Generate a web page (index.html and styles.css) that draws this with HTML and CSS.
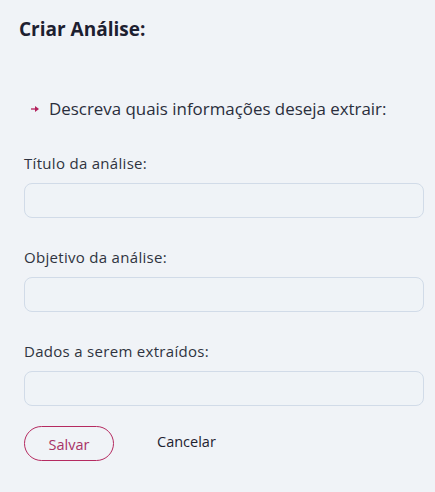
FILE: index.html
```html
<!DOCTYPE html>
<html lang="pt">
<head>
<meta charset="utf-8">
<link rel="stylesheet" href="styles.css">
</head>
<body>
<main class="page">
  <h1 class="title">Criar Análise:</h1>
  <p class="hint">
    <svg class="arrow" width="8" height="8" viewBox="0 0 8 8"><path d="M0 4h5" stroke="#b3205c" stroke-width="1.3"/><path d="M4 1l4 3-4 3z" fill="#b3205c"/></svg>
    <span>Descreva quais informações deseja extrair:</span>
  </p>
  <form class="form">
    <label class="field">
      <span class="label">Título da análise:</span>
      <input class="input" type="text">
    </label>
    <label class="field">
      <span class="label">Objetivo da análise:</span>
      <input class="input" type="text">
    </label>
    <label class="field">
      <span class="label">Dados a serem extraídos:</span>
      <input class="input" type="text">
    </label>
    <div class="actions">
      <button type="button" class="btn-save">Salvar</button>
      <button type="button" class="btn-cancel">Cancelar</button>
    </div>
  </form>
</main>
</body>
</html>
```
FILE: styles.css
```css
html, body {
  margin: 0;
  padding: 0;
  background: #f0f3f7;
}
body {
  font-family: "Open Sans", "Noto Sans", sans-serif;
  color: #262a38;
}
.page {
  padding: 16px 11px 0 19px;
}
.title {
  margin: 0;
  font-size: 19px;
  font-weight: 700;
  line-height: 26px;
  color: #1d2030;
}
.hint {
  margin: 56px 0 0 12px;
  display: flex;
  align-items: center;
  gap: 10px;
  font-size: 16.9px;
  line-height: 22px;
  color: #2a2e3c;
}
.arrow {
  flex: none;
}
.form {
  margin: 33px 0 0 5px;
  display: flex;
  flex-direction: column;
}
.field {
  display: flex;
  flex-direction: column;
  margin-bottom: 29px;
}
.label {
  font-size: 15px;
  letter-spacing: 0.3px;
  line-height: 20px;
  color: #2f3340;
  margin-bottom: 10px;
}
.input {
  box-sizing: border-box;
  height: 35px;
  width: 400px;
  border: 1px solid #d1dbe8;
  border-radius: 8px;
  background: #eff3f7;
  outline: none;
  font: inherit;
}
.actions {
  margin-top: -9px;
  display: flex;
  align-items: center;
  gap: 43px;
}
.btn-save {
  box-sizing: border-box;
  width: 90px;
  height: 35px;
  border: 1px solid #b52a60;
  border-radius: 18px;
  background: transparent;
  color: #a83266;
  font-family: inherit;
  font-size: 14.5px;
  padding: 2px 0 0;
}
.btn-cancel {
  border: none;
  background: transparent;
  padding: 0;
  color: #1e2230;
  font-family: inherit;
  font-size: 14.5px;
  font-weight: 500;
  margin-top: -4px;
}
```
